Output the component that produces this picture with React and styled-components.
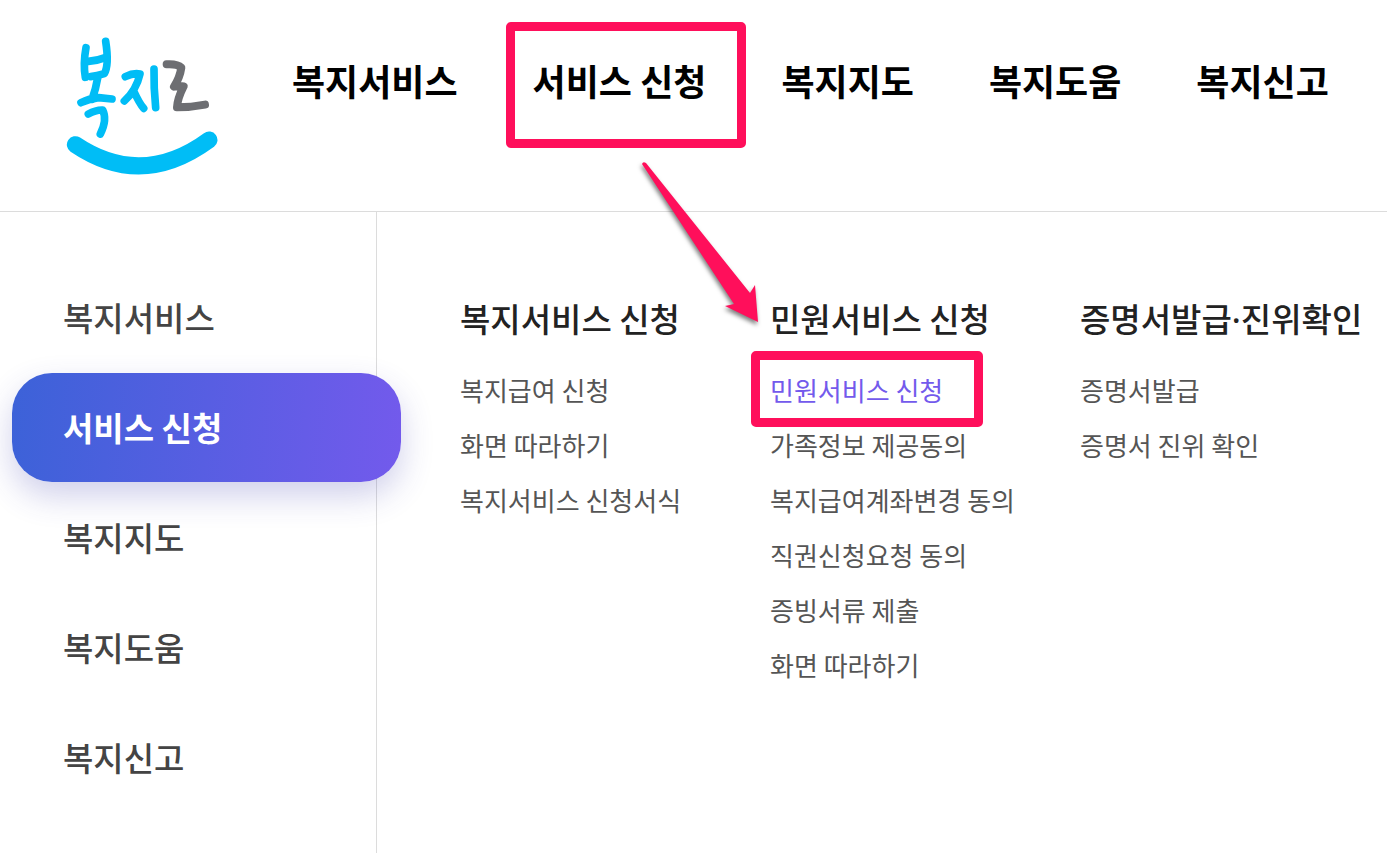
import React from 'react';
import styled, { createGlobalStyle } from 'styled-components';

const GlobalStyle = createGlobalStyle`
  * {
    box-sizing: border-box;
  }

  body {
    margin: 0;
    background: #fff;
    font-family: "Noto Sans CJK KR", "Noto Sans", sans-serif;
    overflow-x: hidden;
  }

  ul {
    margin: 0;
    padding: 0;
    list-style: none;
  }

  a {
    color: inherit;
    text-decoration: none;
    white-space: nowrap;
  }
`;

const topMenu = ['복지서비스', '서비스 신청', '복지지도', '복지도움', '복지신고'];

const groups = [
  {
    title: '복지서비스 신청',
    links: ['복지급여 신청', '화면 따라하기', '복지서비스 신청서식'],
  },
  {
    title: '민원서비스 신청',
    links: [
      '민원서비스 신청',
      '가족정보 제공동의',
      '복지급여계좌변경 동의',
      '직권신청요청 동의',
      '증빙서류 제출',
      '화면 따라하기',
    ],
  },
  {
    title: '증명서발급·진위확인',
    links: ['증명서발급', '증명서 진위 확인'],
  },
];

const Page = styled.div`
  display: flex;
  flex-direction: column;
  min-height: 100vh;
`;

const Header = styled.header`
  display: flex;
  align-items: flex-start;
  gap: 74px;
  padding: 36px 58px 36px 66px;
  border-bottom: 1px solid #dcdcdc;
`;

const LogoLink = styled.a`
  flex: none;
  height: 139px;
`;

const TopNav = styled.nav`
  padding-top: 18px;
`;

const TopList = styled.ul`
  display: flex;
  gap: 75px;
`;

const TopItem = styled.li`
  position: relative;
`;

const TopLink = styled.a`
  color: #000;
  font-size: 36px;
  font-weight: 700;
  line-height: 52px;
`;

const Body = styled.div`
  display: flex;
  flex: 1;
`;

const Sidebar = styled.nav`
  flex: none;
  width: 377px;
  padding: 51px 0 36px 12px;
  border-right: 1px solid #dcdcdc;
`;

const SideList = styled.ul`
  display: flex;
  flex-direction: column;
  gap: 1px;
`;

const SideLink = styled.a`
  display: flex;
  align-items: center;
  width: 389px;
  height: 109px;
  padding: 0 51px 2px;
  border-radius: 40px;
  font-size: 33px;
  font-weight: ${props => (props.$active ? 700 : 500)};
  color: ${props => (props.$active ? '#fff' : '#444')};
  background: ${props => (props.$active ? 'linear-gradient(95deg, #3c62d8, #735aec)' : 'none')};
  box-shadow: ${props => (props.$active ? '0 14px 32px rgba(60, 60, 170, 0.24)' : 'none')};
`;

const Content = styled.main`
  display: grid;
  flex: 1;
  grid-template-columns: repeat(3, minmax(310px, 1fr));
  align-items: start;
  padding: 82px 0 82px 83px;
`;

const GroupTitle = styled.h2`
  margin: 0 0 29px;
  color: #222;
  font-size: 33px;
  font-weight: 500;
  line-height: 48px;
  white-space: nowrap;
`;

// The Korean face draws the middle dot full width, the Latin one is narrow
const Dot = styled.span`
  font-family: "Noto Sans", sans-serif;
  line-height: 1;
`;

const GroupList = styled.ul`
  display: flex;
  flex-direction: column;
  align-items: flex-start;
  gap: 17px;
`;

const GroupItem = styled.li`
  position: relative;
`;

const GroupLink = styled.a`
  display: block;
  color: ${props => (props.$active ? '#735aec' : '#555')};
  font-size: 26px;
  font-weight: 400;
  line-height: 38px;
`;

// Marker frame laid over a menu entry
const Frame = styled.span`
  position: absolute;
  top: ${props => props.$top}px;
  right: ${props => props.$right}px;
  bottom: ${props => props.$bottom}px;
  left: ${props => props.$left}px;
  border: 9px solid #ff0f5b;
  border-radius: 5px;
  pointer-events: none;
`;

const ArrowSvg = styled.svg`
  position: absolute;
  top: 104px;
  left: 105px;
  z-index: 1;
  overflow: visible;
  pointer-events: none;
  filter: drop-shadow(-1px 3px 2px rgba(0, 0, 0, 0.5));
`;

const Logo = () => (
  <svg width="152" height="139" viewBox="48 34 456 417" fill="none" strokeLinecap="round" strokeLinejoin="round" role="img" aria-label="복지로">
    <g stroke="#00bdf6" strokeWidth="23">
      <path d="M108 69C103 96 101 128 106 158" />
      <path d="M167 50C172 82 176 124 163 147Q140 154 122 156" />
      <path d="M110 111Q140 109 168 98" />
      <path d="M143 160Q137 196 126 224M93 234Q118 222 146 219L186 223" />
      <path d="M115 268Q138 255 158 256C170 280 162 306 151 328" />
      <path d="M226 156Q250 144 270 148C262 184 244 210 223 229M251 199Q268 236 281 251" />
      <path d="M312 133Q311 190 317 249" />
    </g>
    <path d="M350 119Q382 117 394 129C391 150 383 169 372 186Q388 182 401 185C391 205 382 228 381 248Q424 248 465 240" stroke="#6d6e72" strokeWidth="24" />
    <path d="M76 360Q275 494 477 346" stroke="#00bdf6" strokeWidth="51" />
  </svg>
);

const Arrow = () => (
  <ArrowSvg width="120" height="164" viewBox="638 158 120 164" aria-hidden="true">
    <path d="M642 164Q643 161 646 163L750 293L755 285L758 322L725 306L734 304Z" fill="#ff0f5b" />
  </ArrowSvg>
);

const Title = ({ text }) => {
  const [first, second] = text.split('·');
  return (
    <GroupTitle>
      {first}
      {second && <Dot>·</Dot>}
      {second}
    </GroupTitle>
  );
};

const App = () => (
  <>
    <GlobalStyle />
    <Page>
      <Header>
        <LogoLink href="#">
          <Logo />
        </LogoLink>
        <TopNav>
          <TopList>
            {topMenu.map((label, i) => (
              <TopItem key={label}>
                <TopLink href="#">{label}</TopLink>
                {i === 1 && (
                  <>
                    <Frame $top={-32} $right={-40} $bottom={-42} $left={-27} />
                    <Arrow />
                  </>
                )}
              </TopItem>
            ))}
          </TopList>
        </TopNav>
      </Header>
      <Body>
        <Sidebar>
          <SideList>
            {topMenu.map((label, i) => (
              <li key={label}>
                <SideLink href="#" $active={i === 1}>{label}</SideLink>
              </li>
            ))}
          </SideList>
        </Sidebar>
        <Content>
          {groups.map((group, g) => (
            <section key={group.title}>
              <Title text={group.title} />
              <GroupList>
                {group.links.map((label, i) => {
                  const active = g === 1 && i === 0;
                  return (
                    <GroupItem key={label}>
                      <GroupLink href="#" $active={active}>{label}</GroupLink>
                      {active && <Frame $top={-20} $right={-40} $bottom={-18} $left={-19} />}
                    </GroupItem>
                  );
                })}
              </GroupList>
            </section>
          ))}
        </Content>
      </Body>
    </Page>
  </>
);

export default App;
